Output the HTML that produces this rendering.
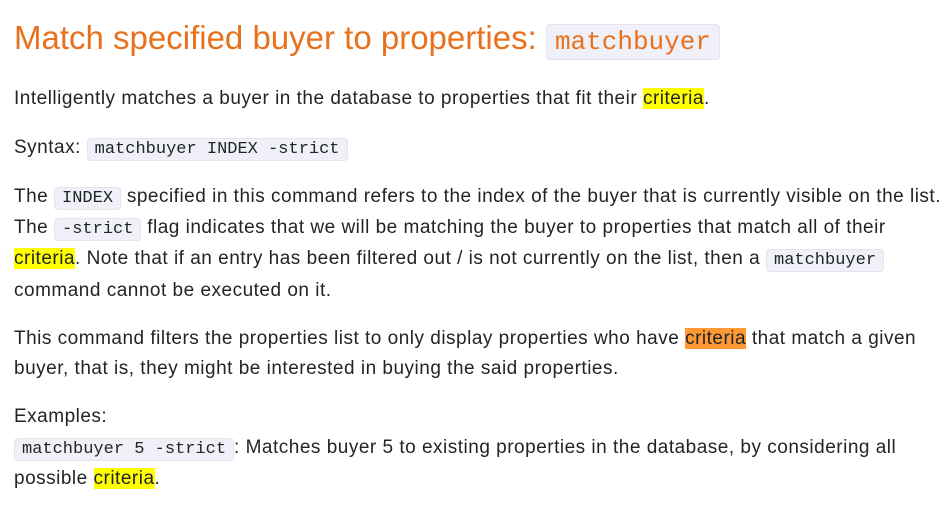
<!DOCTYPE html>
<html><head><meta charset="utf-8"><style>
body{margin:0;background:#fff;width:945px;height:513px;overflow:hidden;font-family:"Liberation Sans",sans-serif;color:#212529;font-size:19px;letter-spacing:0.5px;}
.w{position:absolute;left:14px;top:0;width:930px;}
h1{position:absolute;top:16px;left:0;margin:0;font-weight:normal;font-size:33px;color:#e8711e;white-space:nowrap;line-height:44px;letter-spacing:0;}
h1 code{font-size:26px;padding:2px 8px;}
.l{position:absolute;left:0;white-space:nowrap;line-height:31px;}
code{font-family:"Liberation Mono","DejaVu Sans Mono",monospace;font-size:17px;letter-spacing:0;background:#eff0f8;border:1px solid #e3e4ee;border-radius:4px;padding:1px 7px;color:#212529;}
.y{background:#ffff00;}
.o{background:#ff9933;}
</style></head><body><div class="w">
<h1>Match specified buyer to properties: <code style="color:#e8711e">matchbuyer</code></h1>
<div class="l" style="top:83px">Intelligently matches a buyer in the database to properties that fit their <span class="y">criteria</span>.</div>
<div class="l" style="top:132px">Syntax: <code>matchbuyer INDEX -strict</code></div>
<div class="l" style="top:181px">The <code>INDEX</code> specified in this command refers to the index of the buyer that is currently visible on the list.</div>
<div class="l" style="top:212px">The <code>-strict</code> flag indicates that we will be matching the buyer to properties that match all of their</div>
<div class="l" style="top:243px"><span class="y">criteria</span>. Note that if an entry has been filtered out / is not currently on the list, then a <code>matchbuyer</code></div>
<div class="l" style="top:275px">command cannot be executed on it.</div>
<div class="l" style="top:323px">This command filters the properties list to only display properties who have <span class="o">criteria</span> that match a given</div>
<div class="l" style="top:353px">buyer, that is, they might be interested in buying the said properties.</div>
<div class="l" style="top:401px">Examples:</div>
<div class="l" style="top:432px"><code>matchbuyer 5 -strict</code>: Matches buyer 5 to existing properties in the database, by considering all</div>
<div class="l" style="top:463px">possible <span class="y">criteria</span>.</div>
</div></body></html>
